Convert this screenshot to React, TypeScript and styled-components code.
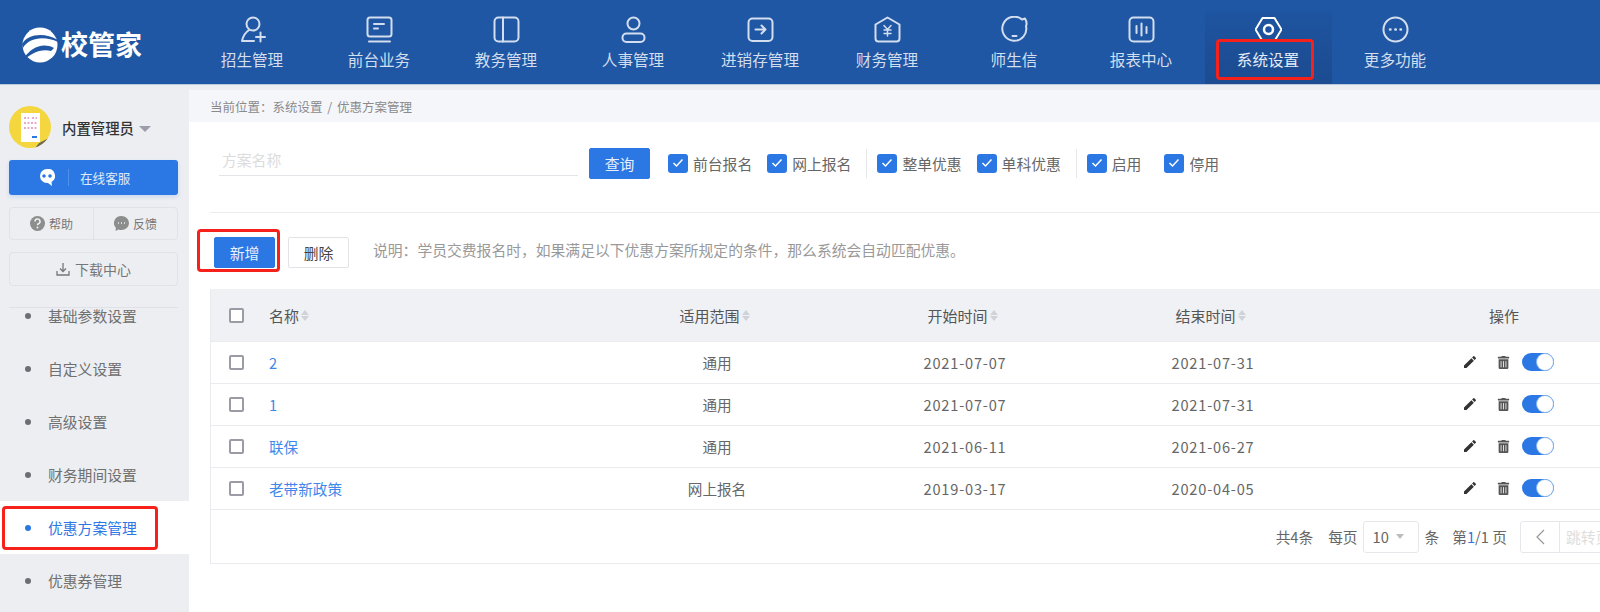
import React from "react";
import styled, { createGlobalStyle } from "styled-components";
import { MdEdit } from "react-icons/md";
import { FaTrashAlt } from "react-icons/fa";

const GlobalStyle = createGlobalStyle`
  html, body {
    margin: 0;
    width: 1600px;
    height: 612px;
    overflow: hidden;
    background: #fff;
    font-family: "Noto Sans CJK SC", "Noto Sans", sans-serif;
  }
`;

const BLUE = "#2b78e4";

const Header = styled.header`
  display: flex;
  height: 84px;
  background: #1f57a4;
  border-bottom: 1px solid #b9c8df;
`;

const Logo = styled.div`
  display: flex;
  align-items: center;
  gap: 3px;
  width: 188.5px;
  padding: 6px 0 0 22px;
  box-sizing: border-box;
  color: #fff;
  font-size: 27px;
  font-weight: 700;
`;

const LogoMark = styled.svg`
  width: 36px;
  height: 36px;
  flex: none;
`;

const LogoText = styled.span`
  margin-bottom: 4px;
`;

const Nav = styled.nav`
  display: flex;
`;

const NavItem = styled.div<{ $active?: boolean }>`
  position: relative;
  width: 127px;
  display: flex;
  flex-direction: column;
  align-items: center;
  padding-top: 16px;
  box-sizing: border-box;
  color: ${(p) => (p.$active ? "#e6edf7" : "#d3deee")};
  font-size: 15.6px;
  line-height: 22px;
  background: ${(p) =>
    p.$active ? "linear-gradient(#1f57a4 11px, #1e54a0 12px, #1c4b90)" : "none"};
`;

const NavIcon = styled.svg<{ $active?: boolean }>`
  width: 27px;
  height: 27px;
  margin-bottom: 5px;
  fill: none;
  stroke: ${(p) => (p.$active ? "#fff" : "currentColor")};
  stroke-width: 2;
  stroke-linecap: round;
  stroke-linejoin: round;
`;

const RedBox = styled.span`
  position: absolute;
  border: 3px solid #f5211a;
  border-radius: 4px;
  box-sizing: border-box;
  pointer-events: none;
`;

const NavRedBox = styled(RedBox)`
  left: 11px;
  top: 39px;
  width: 98px;
  height: 41px;
`;

const Layout = styled.div`
  display: flex;
  height: 527px;
  background: #eceef2;
`;

const Sidebar = styled.aside`
  width: 189px;
  flex: none;
  display: flex;
  flex-direction: column;
  padding-top: 21px;
  box-sizing: border-box;
  overflow: hidden;
`;

const UserRow = styled.div`
  display: flex;
  align-items: center;
  padding-left: 9px;
  height: 42px;
  color: #333;
  font-size: 14.4px;
  font-weight: 500;
`;

const Avatar = styled.svg`
  width: 42px;
  height: 42px;
  margin-right: 11px;
  flex: none;
`;

const Caret = styled.span`
  margin: 4px 0 0 5px;
  border: 6.5px solid transparent;
  border-top: 6.5px solid #9a9ea6;
  border-bottom: 0;
`;

const ServiceButton = styled.div`
  display: flex;
  align-items: center;
  margin: 12px 11px 0 9px;
  height: 35px;
  background: ${BLUE};
  border-radius: 3px;
  color: #dfeafa;
  font-size: 12.6px;
  box-shadow: 0 2px 4px rgba(43, 120, 228, 0.18);
`;

const ServiceIcon = styled.svg`
  width: 16px;
  height: 17px;
  margin-left: 30px;
`;

const ServiceRule = styled.span`
  width: 1px;
  height: 17px;
  margin: 0 11px 0 13px;
  background: #4f90e9;
`;

const HelpRow = styled.div`
  display: flex;
  margin: 12px 11px 0 9px;
  height: 33px;
  border: 1px solid #e0e2e7;
  border-radius: 4px;
  box-sizing: border-box;
`;

const HelpCell = styled.div`
  flex: 1;
  display: flex;
  align-items: center;
  justify-content: center;
  gap: 4px;
  color: #777;
  font-size: 12px;
  & + & {
    border-left: 1px solid #e0e2e7;
  }
`;

const DownloadRow = styled.div`
  display: flex;
  align-items: center;
  justify-content: center;
  gap: 5px;
  margin: 12px 11px 0 9px;
  height: 34px;
  border: 1px solid #e0e2e7;
  border-radius: 4px;
  box-sizing: border-box;
  color: #777;
  font-size: 14px;
`;

const SideRule = styled.div`
  margin: 21px 11px 0 9px;
  height: 1px;
  flex: none;
  background: #dfe1e6;
`;

const MenuClip = styled.div`
  flex: 1;
  overflow: hidden;
`;

const Menu = styled.ul`
  list-style: none;
  margin: -19px 0 0;
  padding: 0;
`;

const MenuItem = styled.li<{ $active?: boolean }>`
  position: relative;
  display: flex;
  align-items: center;
  height: 53px;
  padding-left: 25px;
  box-sizing: border-box;
  font-size: 14.8px;
  color: ${(p) => (p.$active ? BLUE : "#707070")};
  background: ${(p) => (p.$active ? "#fff" : "none")};
  &::before {
    content: "";
    width: 6px;
    height: 6px;
    margin-right: 17px;
    border-radius: 50%;
    background: ${(p) => (p.$active ? BLUE : "#6b6e73")};
  }
`;

const MenuRedBox = styled(RedBox)`
  left: 2px;
  top: 5px;
  width: 156px;
  height: 44px;
`;

const Main = styled.main`
  flex: 1;
  min-width: 0;
  margin-top: 5px;
  background: #fff;
  overflow: hidden;
`;

const Crumb = styled.div`
  display: flex;
  align-items: center;
  height: 32px;
  padding-left: 21px;
  background: #f5f6fa;
  color: #8a8a8a;
  font-size: 12.5px;
  word-spacing: 2px;
  white-space: pre;
`;

const Content = styled.div`
  padding: 26px 0 0 21px;
`;

const FilterRow = styled.div`
  display: flex;
  align-items: center;
  height: 31px;
  padding-bottom: 33px;
  border-bottom: 1px solid #ebecef;
`;

const NameInput = styled.input`
  width: 359px;
  height: 28px;
  margin: 0 11px 3px 9px;
  padding: 0 3px 4px;
  border: 0;
  border-bottom: 1px solid #e3e5e9;
  box-sizing: border-box;
  outline: none;
  font: inherit;
  font-size: 14.8px;
  &::placeholder {
    color: #dcdcdc;
  }
`;

const Button = styled.button<{ $primary?: boolean }>`
  position: relative;
  width: 61px;
  height: 31px;
  padding: 0;
  font: inherit;
  font-size: 14.8px;
  border-radius: 2px;
  box-sizing: border-box;
  color: ${(p) => (p.$primary ? "#e8f0fc" : "#444")};
  background: ${(p) => (p.$primary ? BLUE : "#fff")};
  border: 1px solid ${(p) => (p.$primary ? BLUE : "#e2e3e7")};
`;

const ButtonRedBox = styled(RedBox)`
  left: -18px;
  top: -9px;
  width: 83px;
  height: 43px;
`;

const CheckGroup = styled.div<{ $gap: number }>`
  display: flex;
  align-items: center;
  gap: ${(p) => p.$gap}px;
  margin-left: 18px;
  padding-bottom: 1px;
`;

const FilterRule = styled.span`
  width: 1px;
  height: 29px;
  margin: 0 -8px 0 15px;
  background: #e6e7ea;
`;

const Check = styled.label`
  display: flex;
  align-items: center;
  gap: 5px;
  color: #666;
  font-size: 14.8px;
`;

const CheckBox = styled.span`
  width: 20px;
  height: 19px;
  display: flex;
  align-items: center;
  justify-content: center;
  border-radius: 3px;
  background: ${BLUE};
`;

const ActionRow = styled.div`
  display: flex;
  align-items: center;
  gap: 13px;
  margin: 24px 0 21px 4px;
`;

const Note = styled.span`
  margin: 0 0 6px 11px;
  color: #999;
  font-size: 14.8px;
  white-space: nowrap;
`;

const Table = styled.div`
  width: 1461px;
  border-left: 1px solid #e9ebef;
  box-sizing: border-box;
`;

const Row = styled.div<{ $head?: boolean }>`
  display: grid;
  grid-template-columns: 48px 334px 248px 248px 248px 334px;
  align-items: center;
  height: ${(p) => (p.$head ? "53px" : "42px")};
  padding-bottom: ${(p) => (p.$head ? "0" : "1px")};
  box-sizing: border-box;
  border-bottom: 1px solid #e9ebef;
  background: ${(p) => (p.$head ? "#eff1f5" : "#fff")};
  color: ${(p) => (p.$head ? "#555" : "#666")};
  font-size: ${(p) => (p.$head ? "15px" : "14.6px")};
`;

const Cell = styled.div<{ $left?: boolean }>`
  display: flex;
  align-items: center;
  justify-content: ${(p) => (p.$left ? "flex-start" : "center")};
  padding-left: ${(p) => (p.$left ? "10px" : "0")};
`;

const SortCell = styled(Cell)`
  padding-right: 5px;
`;

const DateCell = styled(Cell)`
  letter-spacing: 0.8px;
`;

const BoxCell = styled.div`
  display: flex;
  padding-left: 18px;
`;

const TableBox = styled.span`
  width: 15px;
  height: 15px;
  box-sizing: border-box;
  border: 2px solid #9b9ba5;
  border-radius: 2px;
  background: #fff;
`;

const Link = styled.span`
  color: #3f87ea;
`;

const Sort = styled.span`
  display: inline-flex;
  flex-direction: column;
  gap: 1px;
  margin-left: 2px;
  &::before,
  &::after {
    content: "";
    border: 4.5px solid transparent;
    border-top: 0;
    border-bottom: 5px solid #cfd2d7;
  }
  &::after {
    border-bottom: 0;
    border-top: 5px solid #cfd2d7;
  }
`;

const Actions = styled.div`
  display: flex;
  align-items: center;
  margin-left: 8px;
  color: #333;
`;

const TrashIcon = styled(FaTrashAlt)`
  margin: 0 12px 0 19px;
  color: #555;
`;

const Toggle = styled.span`
  display: flex;
  justify-content: flex-end;
  align-items: center;
  width: 32px;
  height: 18px;
  padding-right: 1px;
  box-sizing: border-box;
  border-radius: 9px;
  background: ${BLUE};
  &::after {
    content: "";
    width: 16px;
    height: 16px;
    border-radius: 50%;
    background: #fff;
    box-shadow: 0 0 0 1px #8db8f0;
  }
`;

const Pager = styled.div`
  display: flex;
  align-items: center;
  justify-content: flex-end;
  height: 54px;
  box-sizing: border-box;
  border-bottom: 1px solid #e9ebef;
  color: #666;
  font-size: 14.7px;
  white-space: nowrap;
`;

const PagerText = styled.span<{ $tight?: boolean }>`
  margin-right: ${(p) => (p.$tight ? "13px" : "15px")};
`;

const PageSize = styled.div`
  display: flex;
  align-items: center;
  width: 56px;
  height: 32px;
  margin: 0 6px 0 -10px;
  padding-left: 9px;
  box-sizing: border-box;
  border: 1px solid #e6e7ea;
  border-radius: 3px;
  &::after {
    content: "";
    margin-left: 7px;
    border: 4.5px solid transparent;
    border-top: 5px solid #bdbdbd;
    border-bottom: 0;
  }
`;

const Current = styled.span`
  color: ${BLUE};
`;

const JumpBox = styled.div`
  display: flex;
  width: 151px;
  height: 32px;
  box-sizing: border-box;
  border: 1px solid #e6e7ea;
  border-radius: 3px;
`;

const PrevButton = styled.span`
  display: flex;
  align-items: center;
  justify-content: center;
  width: 38px;
  border-right: 1px solid #e6e7ea;
`;

const JumpText = styled.span`
  padding-left: 6px;
  line-height: 30px;
  color: #dddddd;
`;

const navIcons = [
  <><circle cx="14" cy="8" r="6.500" /><path d="M10 14c-3 2-6 6-7 11h12M17 21h9M21.500 16.500v9" /></>,
  <><rect x="1.500" y="1.500" width="24" height="19" rx="2.500" /><path d="M8 8h10M8 12.500h4M3 25.500h21" /></>,
  <><rect x="1.500" y="1.500" width="24" height="24" rx="4" /><path d="M10 1.500v24" /></>,
  <><circle cx="13.500" cy="7.500" r="6" /><rect x="2.500" y="17.500" width="22" height="8.500" rx="4" /></>,
  <><rect x="1.500" y="2.500" width="24" height="22.500" rx="4" /><path d="M8.500 13.500h10M14.500 9.500l4 4-4 4" /></>,
  <><path d="M13.500 1.500 25.500 8.500v14a3 3 0 0 1-3 3h-18a3 3 0 0 1-3-3v-14z" /><path d="M10 9.500l3.500 4 3.500-4M10 14h7M10 17.500h7M13.500 14v6" strokeWidth="1.500" /></>,
  <><path d="M21 3.500A12 12 0 1 0 25 10c1-2 .5-5-1-7.500z" /><path d="M11.500 20h4" /></>,
  <><rect x="1.500" y="1.500" width="24" height="24" rx="4" /><path d="M8.500 10v7M13.500 7.500v12M18.500 11v6" /></>,
  <><path d="M7.500 2h12l7 11.500-7 11.500h-12l-7-11.500z" /><circle cx="13.500" cy="13.500" r="4.500" strokeWidth="2.500" /></>,
  <><circle cx="13.500" cy="13.500" r="12" /><path d="M8 13.500h.5M13.300 13.500h.5M18.500 13.500h.5" strokeWidth="2.500" /></>,
];

const navItems = ["招生管理", "前台业务", "教务管理", "人事管理", "进销存管理", "财务管理", "师生信", "报表中心", "系统设置", "更多功能"];
const menuItems = ["基础参数设置", "自定义设置", "高级设置", "财务期间设置", "优惠方案管理", "优惠券管理"];
const checks = [
  { gap: 15, labels: ["前台报名", "网上报名"] },
  { gap: 15, labels: ["整单优惠", "单科优惠"] },
  { gap: 23, labels: ["启用", "停用"] },
];
const rows = [
  { name: "2", scope: "通用", start: "2021-07-07", end: "2021-07-31" },
  { name: "1", scope: "通用", start: "2021-07-07", end: "2021-07-31" },
  { name: "联保", scope: "通用", start: "2021-06-11", end: "2021-06-27" },
  { name: "老带新政策", scope: "网上报名", start: "2019-03-17", end: "2020-04-05" },
];

const crumbText = "当前位置\uFF1A系统设置 / 优惠方案管理";
const noteText = "说明\uFF1A学员交费报名时\uFF0C如果满足以下优惠方案所规定的条件\uFF0C那么系统会自动匹配优惠\u3002";

const App: React.FC = () => {
  return (
    <>
      <GlobalStyle />
      <Header>
        <Logo>
          <LogoMark viewBox="0 0 36 36">
            <circle cx="18" cy="18" r="17.500" fill="#fff" />
            <path d="M1 21C6 11 22 8 36 15v-2C22 5 6 7 0 17z" fill="#1f57a4" />
            <path d="M0 35C8 26 20 21 29 24l3-3C20 15 9 21 2 31z" fill="#1f57a4" />
            <path d="M0 36 4 29 0 28zM0 12 4 5 0 0zM36 0v4l-2 0z" fill="#1f57a4" />
          </LogoMark>
          <LogoText>校管家</LogoText>
        </Logo>
        <Nav>
          {navItems.map((label, i) => (
            <NavItem key={label} $active={label === "系统设置"}>
              <NavIcon viewBox="0 0 27 27" $active={label === "系统设置"}>{navIcons[i]}</NavIcon>
              {label}
              {label === "系统设置" && <NavRedBox />}
            </NavItem>
          ))}
        </Nav>
      </Header>
      <Layout>
        <Sidebar>
          <UserRow>
            <Avatar viewBox="0 0 42 42">
              <clipPath id="avatar-clip"><circle cx="21" cy="21" r="21" /></clipPath>
              <g clipPath="url(#avatar-clip)">
                <rect width="42" height="42" fill="#f4d63f" />
                <rect x="12" y="7" width="19" height="29" fill="#fff" />
                <path d="M15 12h5M23 12h5M15 17h13M15 22h13" stroke="#d0579a" strokeWidth="1.200" strokeDasharray="2 1.500" />
                <path d="M23 31h5" stroke="#2b78e4" strokeWidth="2" />
                <path d="M30 37l12-6v11H26z" fill="#6e6a55" />
              </g>
            </Avatar>
            内置管理员
            <Caret />
          </UserRow>
          <ServiceButton>
            <ServiceIcon viewBox="0 0 16 17">
              <path d="M8 0a7 7 0 0 0 0 14h1l4 3-.5-4A7 7 0 0 0 8 0z" fill="#fff" />
              <circle cx="5" cy="7" r="1.800" fill={BLUE} />
              <circle cx="11" cy="7" r="1.800" fill={BLUE} />
            </ServiceIcon>
            <ServiceRule />
            在线客服
          </ServiceButton>
          <HelpRow>
            <HelpCell>
              <svg width="15" height="15" viewBox="0 0 15 15">
                <circle cx="7.500" cy="7.500" r="7.500" fill="#8d8d8d" />
                <path d="M5 5.500a2.500 2.500 0 1 1 3.500 2.300c-.7.3-1 .7-1 1.500" fill="none" stroke="#eceef2" strokeWidth="1.600" />
                <circle cx="7.500" cy="11.500" r="1" fill="#eceef2" />
              </svg>
              帮助
            </HelpCell>
            <HelpCell>
              <svg width="15" height="15" viewBox="0 0 15 15">
                <path d="M7.500 0a7.500 7 0 0 1 0 14c-1 0-2-.2-3-.6L1.500 15l.4-3.300A7.500 7 0 0 1 7.500 0z" fill="#8d8d8d" />
                <path d="M4 7h1M7 7h1M10 7h1" stroke="#eceef2" strokeWidth="1.500" />
              </svg>
              反馈
            </HelpCell>
          </HelpRow>
          <DownloadRow>
            <svg width="14" height="14" viewBox="0 0 14 14" fill="none" stroke="#777" strokeWidth="1.300">
              <path d="M7 1v8M4 6.500 7 9.500l3-3M1 9v4h12V9" />
            </svg>
            下载中心
          </DownloadRow>
          <SideRule />
          <MenuClip>
            <Menu>
              {menuItems.map((item) => (
                <MenuItem key={item} $active={item === "优惠方案管理"}>
                  {item}
                  {item === "优惠方案管理" && <MenuRedBox />}
                </MenuItem>
              ))}
            </Menu>
          </MenuClip>
        </Sidebar>
        <Main>
          <Crumb>{crumbText}</Crumb>
          <Content>
            <FilterRow>
              <NameInput placeholder="方案名称" />
              <Button $primary>查询</Button>
              {checks.map((group, i) => (
                <React.Fragment key={group.labels[0]}>
                  <CheckGroup $gap={group.gap}>
                    {group.labels.map((label) => (
                      <Check key={label}>
                        <CheckBox>
                          <svg width="12" height="10" viewBox="0 0 12 10" fill="none" stroke="#fff" strokeWidth="1.500">
                            <path d="M1.500 5 4.500 8l6-6.500" />
                          </svg>
                        </CheckBox>
                        {label}
                      </Check>
                    ))}
                  </CheckGroup>
                  {i < 2 && <FilterRule />}
                </React.Fragment>
              ))}
            </FilterRow>
            <ActionRow>
              <Button $primary>
                新增
                <ButtonRedBox />
              </Button>
              <Button>删除</Button>
              <Note>{noteText}</Note>
            </ActionRow>
            <Table>
              <Row $head>
                <BoxCell><TableBox /></BoxCell>
                <Cell $left>名称<Sort /></Cell>
                <SortCell>适用范围<Sort /></SortCell>
                <SortCell>开始时间<Sort /></SortCell>
                <SortCell>结束时间<Sort /></SortCell>
                <Cell>操作</Cell>
              </Row>
              {rows.map((row) => (
                <Row key={row.name}>
                  <BoxCell><TableBox /></BoxCell>
                  <Cell $left><Link>{row.name}</Link></Cell>
                  <Cell>{row.scope}</Cell>
                  <DateCell>{row.start}</DateCell>
                  <DateCell>{row.end}</DateCell>
                  <Cell>
                    <Actions>
                      <MdEdit size={16} />
                      <TrashIcon size={13} />
                      <Toggle />
                    </Actions>
                  </Cell>
                </Row>
              ))}
              <Pager>
                <PagerText>共4条</PagerText>
                <PagerText>每页</PagerText>
                <PageSize>10</PageSize>
                <PagerText $tight>条</PagerText>
                <PagerText $tight>第<Current>1</Current>/1 页</PagerText>
                <JumpBox>
                  <PrevButton>
                    <svg width="10" height="16" viewBox="0 0 10 16" fill="none" stroke="#999" strokeWidth="1.200">
                      <path d="M9 1 2 8l7 7" />
                    </svg>
                  </PrevButton>
                  <JumpText>跳转页</JumpText>
                </JumpBox>
              </Pager>
            </Table>
          </Content>
        </Main>
      </Layout>
    </>
  );
};

export default App;
